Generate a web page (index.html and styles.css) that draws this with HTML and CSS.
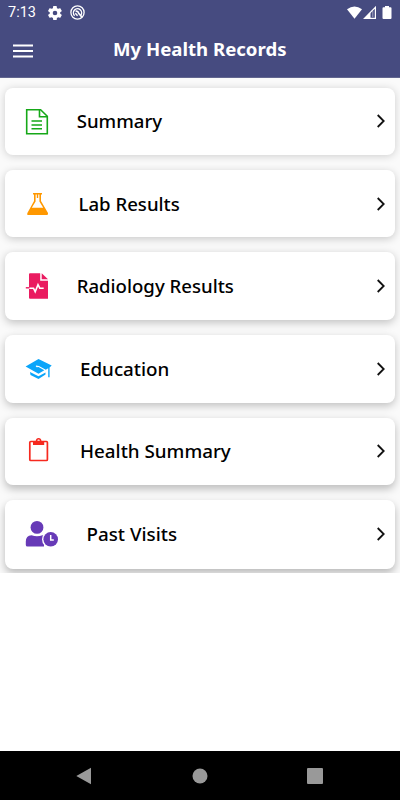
FILE: index.html
```html
<!DOCTYPE html>
<html lang="en">
<head>
<meta charset="utf-8">
<title>My Health Records</title>
<link rel="stylesheet" href="styles.css">
</head>
<body>
<header class="header">
  <div class="status">
    <span class="time">7:13</span>
    <svg class="gear" width="14" height="14" viewBox="2 2 20 20"><path fill="#fff" d="M19.4 13a7.500 7.500 0 0 0 0-2l2.100-1.600a.5.5 0 0 0 .1-.6l-2-3.500a.5.5 0 0 0-.6-.2l-2.500 1a7.300 7.300 0 0 0-1.700-1l-.4-2.600a.5.5 0 0 0-.5-.5h-4a.5.5 0 0 0-.5.5L9 5.100a7.700 7.700 0 0 0-1.700 1l-2.500-1a.5.5 0 0 0-.6.2l-2 3.500a.5.500 0 0 0 .1.600L4.500 11a8 8 0 0 0 0 2l-2.200 1.600a.5.500 0 0 0-.1.600l2 3.500c.1.200.4.300.6.200l2.500-1a7.300 7.300 0 0 0 1.700 1l.4 2.600c0 .3.200.5.500.5h4c.3 0 .5-.2.500-.5l.4-2.600a7.700 7.700 0 0 0 1.700-1l2.500 1c.2.100.5 0 .6-.2l2-3.500a.5.500 0 0 0-.1-.600zM12 15.300a3.300 3.300 0 1 1 0-6.600 3.300 3.300 0 0 1 0 6.600z"/></svg>
    <svg class="target" width="15" height="15" viewBox="0 0 15 15" fill="none" stroke="#fff"><circle cx="7.500" cy="7.500" r="6.600" stroke-width="1.300"/><path d="M4.600 10.700A4.100 4.100 0 1 1 10.700 10.400" stroke-width="1.400"/><path d="M5.600 6.300Q8 5.800 8.700 8.300L11.800 12" stroke-width="1.700"/><path d="M5.300 8.200L7.600 10.800" stroke-width="1.400"/></svg>
    <svg class="signals" width="46" height="14" viewBox="0 0 46 14"><path fill="#fff" d="M0 3.200Q7.500-2.400 15 3.200L7.500 12.700z"/><path fill="none" stroke="#fff" stroke-width="1.200" d="M17.500 12.400H28.400V1.300z"/><path fill="#fff" d="M16.600 13L23.500 6v7z"/><path stroke="#fff" d="M25.800 5v6" opacity=".5"/><path fill="#fff" d="M38 0h4v1.300h1.500q1 0 1 1V12q0 1-1 1h-7q-1 0-1-1V2.300q0-1 1-1H38z"/></svg>
  </div>
  <div class="titlebar">
    <svg class="menu" width="20" height="14" viewBox="0 0 20 14"><path stroke="#fff" stroke-width="2" d="M0 1.500h20M0 7h20M0 12.500h20"/></svg>
    <h1>My Health Records</h1>
  </div>
</header>
<main class="records">
  <a class="card">
    <svg class="icon" width="36" height="28" viewBox="0 0 36 28" fill="none" stroke="#16a818" stroke-width="1.600"><path d="M1.700 2.700H15.600L22.300 9.300V26.800H1.700z"/><path d="M14.500 3V9.800H22"/><path d="M6.500 14H17M6.500 18H17M6.500 21.800H17"/></svg>
    <span class="label summary">Summary</span>
    <svg class="chevron" width="10" height="14" viewBox="0 0 10 14"><path d="M1.700 1L7.700 7L1.700 13"/></svg>
  </a>
  <a class="card">
    <svg class="icon" width="36" height="28" viewBox="0 0 36 28"><path fill="#ff9800" fill-rule="evenodd" d="M8 3H17V4.500H16V11L23 23Q23.400 25 22 25H3Q1.500 25 2.400 23L9 11V4.500H8zM10.600 4.500V11.500L6.800 17.800H18.200L14.400 11.500V4.500H13.200V8H11.800V4.500z"/></svg>
    <span class="label lab">Lab Results</span>
    <svg class="chevron" width="10" height="14" viewBox="0 0 10 14"><path d="M1.700 1L7.700 7L1.700 13"/></svg>
  </a>
  <a class="card">
    <svg class="icon" width="36" height="28" viewBox="0 0 36 28"><path fill="#ea1b60" d="M5 1.200H15.200V8.700H23V26.800H5Q4 26.800 4 25.800V2.200Q4 1.200 5 1.200zM16.700 1.200L23 7.300H16.700z"/><path fill="none" stroke="#fff" stroke-width="1.600" d="M4 16.200H8.500L10.200 19.800L13 12.700L14.800 16.200H18.700"/><path stroke="#ea1b60" stroke-width="1.400" d="M.8 15.800H4.500"/></svg>
    <span class="label radiology">Radiology Results</span>
    <svg class="chevron" width="10" height="14" viewBox="0 0 10 14"><path d="M1.700 1L7.700 7L1.700 13"/></svg>
  </a>
  <a class="card">
    <svg class="icon" width="36" height="28" viewBox="0 0 36 28"><path fill="#0aa5fa" d="M.6 11.500L13.500 4L26.700 10.500L24.600 12.400V22.300H23.200V13.200L20.800 14.700L14 11L11 10.600Q10.200 11.800 11.800 12.200L13.500 12.100L19.300 15.300L13.500 18.700zM5 17L13.500 21.300L20.500 17.400V19.600L13.500 24L5.500 19.900z"/></svg>
    <span class="label education">Education</span>
    <svg class="chevron" width="10" height="14" viewBox="0 0 10 14"><path d="M1.700 1L7.700 7L1.700 13"/></svg>
  </a>
  <a class="card">
    <svg class="icon" width="36" height="28" viewBox="0 0 36 28"><rect x="4.800" y="4.500" width="17.600" height="19" rx="1" fill="none" stroke="#f6291f" stroke-width="1.700"/><path fill="#f6291f" fill-rule="evenodd" d="M8 4H10.700Q11 1.100 13.600 1.100T16.500 4H19.200V8H8zM12.400 3.800a1.200 1.200 0 1 0 2.400 0a1.200 1.200 0 1 0-2.400 0"/></svg>
    <span class="label health">Health Summary</span>
    <svg class="chevron" width="10" height="14" viewBox="0 0 10 14"><path d="M1.700 1L7.700 7L1.700 13"/></svg>
  </a>
  <a class="card">
    <svg class="icon" width="36" height="28" viewBox="0 0 36 28"><circle cx="12" cy="7.400" r="6.400" fill="#673ab7"/><path fill="#673ab7" d="M.8 25V21.500Q.8 15.500 6.500 15.200Q12 17.400 17.500 15.200L19 15.500V26.500H2.500Q.8 26.500 .8 25z"/><circle cx="25.700" cy="19.300" r="8.700" fill="#fff"/><circle cx="25.700" cy="19.300" r="7.300" fill="#673ab7"/><path d="M25.700 15V20H28.800" fill="none" stroke="#fff" stroke-width="1.500"/></svg>
    <span class="label visits">Past Visits</span>
    <svg class="chevron" width="10" height="14" viewBox="0 0 10 14"><path d="M1.700 1L7.700 7L1.700 13"/></svg>
  </a>
</main>
<nav class="navbar">
  <svg width="16" height="18" viewBox="0 0 16 18"><path fill="#999" d="M.3 9L15 .8V17.200z"/></svg>
  <svg width="16" height="16" viewBox="0 0 16 16"><circle cx="8" cy="8" r="7.500" fill="#999"/></svg>
  <svg width="16" height="16" viewBox="0 0 16 16"><rect width="16" height="16" rx="1" fill="#999"/></svg>
</nav>
</body>
</html>
```
FILE: styles.css
```css
* { box-sizing: border-box; }
body {
  margin: 0;
  width: 400px;
  height: 800px;
  display: flex;
  flex-direction: column;
  background: #fff;
  font-family: "Noto Sans", sans-serif;
  overflow: hidden;
}
svg { display: block; flex: none; }
.header { height: 78px; background: #464b80; border-bottom: 1px solid #62668f; color: #fff; }
.status { height: 25px; padding: 0 7px 0 8px; display: flex; align-items: center; }
.time { width: 40px; font: 14.500px/25px Roboto, sans-serif; }
.target { margin-left: 7.500px; }
.signals { margin-left: auto; }
.titlebar { height: 52px; display: flex; align-items: center; padding-left: 13px; }
h1 { margin: 0 0 4px 80px; font-size: 18.600px; line-height: 26px; font-weight: 700; white-space: nowrap; }
.records {
  height: 495px;
  padding: 9.600px 5px 0;
  display: flex;
  flex-direction: column;
  gap: 15px;
  overflow: hidden;
  background: #fafafa;
}
.card {
  height: 67.400px;
  flex: none;
  display: flex;
  align-items: center;
  padding: 0 9px 0 20px;
  border-radius: 8px;
  background: #fff;
  box-shadow: 0 1px 8px rgba(0, 0, 0, .18);
}
/* Shadows deepen down the list, as under a single overhead light. */
.card:nth-child(2) { box-shadow: 0 2px 8px rgba(0, 0, 0, .2); }
.card:nth-child(3) { box-shadow: 0 2.500px 8px rgba(0, 0, 0, .22); }
.card:nth-child(4) { margin-top: .6px; box-shadow: 0 3px 8px rgba(0, 0, 0, .23); }
.card:nth-child(5) { box-shadow: 0 3.500px 9px rgba(0, 0, 0, .25); }
.card:nth-child(6) { height: 68.400px; box-shadow: 0 4px 9px rgba(0, 0, 0, .27); }
.label { font-size: 18.600px; line-height: 28px; font-weight: 500; color: #000; white-space: nowrap; }
.summary, .radiology { margin-left: 15.700px; }
.lab { margin-left: 17.500px; }
.education, .health { margin-left: 19px; font-size: 18.800px; }
.visits { margin-left: 25.500px; font-size: 18.800px; }
.chevron { margin-left: auto; fill: none; stroke: #111; stroke-width: 1.800; }
.navbar {
  height: 49px;
  margin-top: auto;
  padding: 0 77px 0 76px;
  display: flex;
  justify-content: space-between;
  align-items: center;
  background: #000;
}
```
